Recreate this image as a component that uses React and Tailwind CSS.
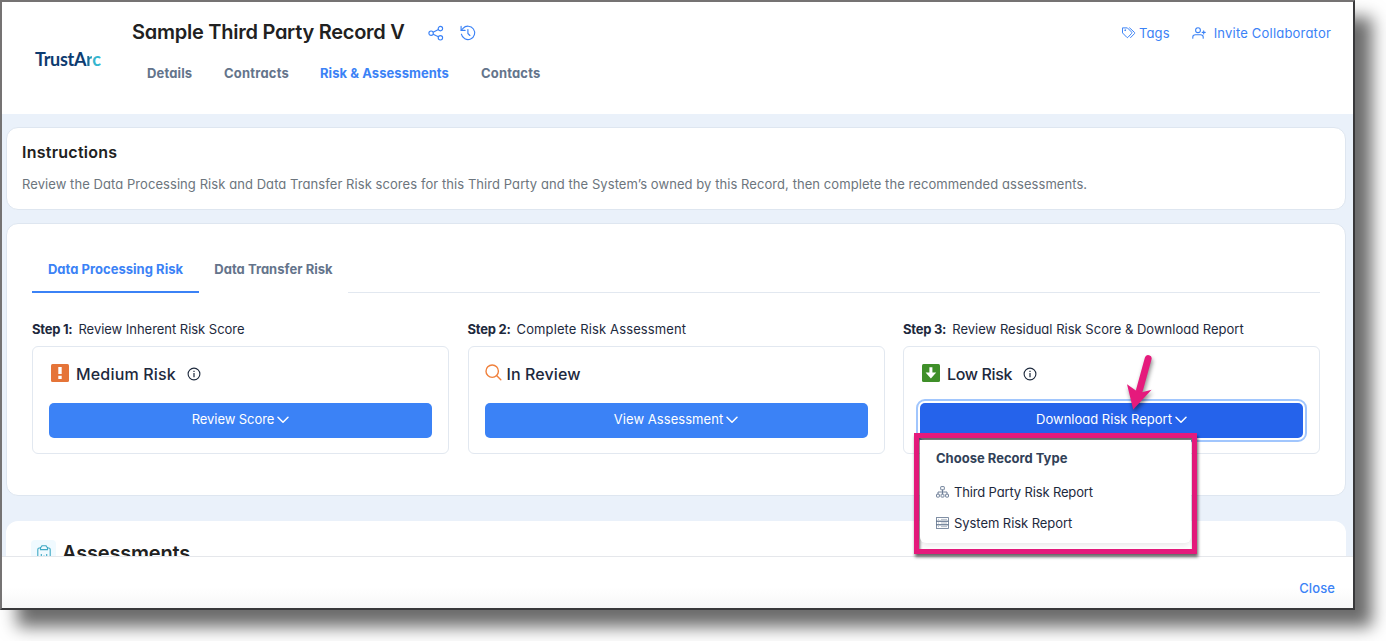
const navItems = [
  { label: 'Details', style: 'w-[45px] mr-8 tracking-[0.14px] text-[#64748b]' },
  { label: 'Contracts', style: 'w-[65px] mr-[31px] tracking-[0.2px] text-[#64748b]' },
  { label: 'Risk & Assessments', style: 'w-[129px] mr-8 tracking-[0.06px] text-[#3b82f6]' },
  { label: 'Contacts', style: 'w-[60px] tracking-[0.17px] text-[#64748b]' },
];

function ShareIcon() {
  return (
    <svg width="16" height="16" viewBox="0 0 16 16" fill="none" stroke="currentColor" strokeWidth="1.15">
      <circle cx="3.1" cy="8.2" r="2.2" />
      <circle cx="12.4" cy="3.6" r="2.2" />
      <circle cx="12.4" cy="12.8" r="2.2" />
      <path d="M5.1 7.2l5.3-2.6M5.1 9.2l5.3 2.6" />
    </svg>
  );
}

function HistoryIcon() {
  return (
    <svg width="16" height="16" viewBox="0 0 16 16" fill="none" stroke="currentColor" strokeWidth="1.15" strokeLinecap="round" strokeLinejoin="round">
      <path d="M1.4 9.2A6.7 6.7 0 1 0 3 3.4L1.2 5.3" />
      <path d="M1.1 1.4v4h4" />
      <path d="M7.9 4.6v3.9l2 2" />
    </svg>
  );
}

function TagsIcon() {
  return (
    <svg width="14" height="12" viewBox="0 0 14 12" fill="none" stroke="currentColor" strokeLinejoin="round" strokeLinecap="round">
      <path d="M.8.9h4.6l4.2 4.2c.4.4.4.9 0 1.3L6 10.3c-.4.4-.8.4-1.2 0L.8 6.2z" />
      <path d="M7.6.9l4.8 4.4c.5.4.5.8.1 1.3l-3.9 4" />
      <circle cx="3.1" cy="3.2" r=".4" />
    </svg>
  );
}

function PersonPlusIcon() {
  return (
    <svg width="14" height="12" viewBox="0 0 14 12" fill="none" stroke="currentColor" strokeWidth="1.1" strokeLinecap="round">
      <circle cx="6" cy="3.2" r="2.4" />
      <path d="M.8 11.2V10C.8 8.6 2 7.7 3.4 7.7h5.2c1.4 0 2.6.9 2.6 2.3v1.2M10.2 5.4h3M11.7 3.9v3" />
    </svg>
  );
}

function InfoIcon() {
  return (
    <svg className="ml-[11px]" width="14" height="14" viewBox="0 0 14 14" fill="none" stroke="currentColor">
      <circle cx="7" cy="7" r="5.9" strokeWidth="1.1" />
      <path d="M7 6v4.2M7 3.8v1.2" strokeWidth="1.2" />
    </svg>
  );
}

function SearchIcon() {
  return (
    <svg className="mr-[5px] mb-[4px]" width="17" height="17" viewBox="0 0 17 17" fill="none" stroke="#f0803c" strokeWidth="1.4" strokeLinecap="round">
      <circle cx="7.2" cy="7.2" r="6.2" />
      <path d="M11.8 11.8l4 4" />
    </svg>
  );
}

function ChevronIcon() {
  return (
    <svg width="12" height="8" viewBox="0 0 12 8" fill="none" stroke="currentColor" strokeWidth="1.5" strokeLinecap="round" strokeLinejoin="round">
      <path d="M1 1.2l5 5 5-5" />
    </svg>
  );
}

function MediumIcon() {
  return (
    <svg width="18" height="18" viewBox="0 0 18 18">
      <rect width="18" height="18" rx="1.5" fill="#e57438" />
      <path d="M7.3 3h3.4v7H7.3zM7.3 11.7h3.4v3.2H7.3z" fill="#fff" />
    </svg>
  );
}

function LowIcon() {
  return (
    <svg width="18" height="18" viewBox="0 0 18 18">
      <rect width="18" height="18" rx="1.5" fill="#3f8f29" />
      <path d="M7.4 3.2h3v5.4h3.8L8.9 14.6 3.6 8.6h3.8z" fill="#fff" />
    </svg>
  );
}

function DiagramIcon() {
  return (
    <svg width="13" height="12" viewBox="0 0 13 12" fill="none" stroke="currentColor" strokeWidth="0.9">
      <rect x="4.7" y="0.6" width="3.6" height="3.2" rx="0.5" />
      <rect x="0.5" y="8.2" width="2.9" height="2.9" rx="0.5" />
      <rect x="5.05" y="8.2" width="2.9" height="2.9" rx="0.5" />
      <rect x="9.6" y="8.2" width="2.9" height="2.9" rx="0.5" />
      <path d="M6.5 3.8v4.4M2 8.2V6h9v2.2" />
    </svg>
  );
}

function ServerIcon() {
  return (
    <svg width="13" height="12" viewBox="0 0 13 12" fill="none" stroke="currentColor" strokeWidth="0.8">
      <rect x="0.5" y="0.6" width="12" height="3.6" />
      <rect x="0.5" y="4.2" width="12" height="3.6" />
      <rect x="0.5" y="7.8" width="12" height="3.6" />
      <path d="M2 2.4h1M5 2.4h6M2 6h1M5 6h6M2 9.6h1M5 9.6h6" strokeOpacity="0.6" />
    </svg>
  );
}

function ClipboardIcon() {
  return (
    <svg width="14" height="17" viewBox="0 0 14 17" fill="none" stroke="currentColor" strokeWidth="1.1">
      <path d="M3.4 3H2.2C1.3 3 .8 3.6.8 4.4v10.2c0 .8.5 1.4 1.4 1.4h9.6c.9 0 1.4-.6 1.4-1.4V4.4c0-.8-.5-1.4-1.4-1.4h-1.2" />
      <path d="M3.5 4.6V2.3l1-.4.4-1.1h4.2l.4 1.1 1 .4v2.3z" />
      <path d="M4.3 9v5M7 10.5V14M9.7 9v5" />
    </svg>
  );
}

function Arrow() {
  return (
    <svg className="pointer-events-none absolute -top-[51px] left-[204px] drop-shadow-[1px_3px_2px_rgba(0,0,0,0.45)]" width="32" height="60" viewBox="0 0 32 60">
      <path d="M24.2 6.5L15.5 38" stroke="#e51a7c" strokeWidth="6.8" strokeLinecap="round" />
      <path d="M9.2 57.5L3 32.2l10.3 7.3 3.7 1 10.6-2.7z" fill="#e51a7c" />
    </svg>
  );
}

function RecordMenu() {
  return (
    <div className="absolute top-[30px] -left-[6px] z-10 h-[121px] w-[283px] border-[5px] border-[#e51a7c] shadow-[1px_3px_3px_rgba(0,0,0,0.6),inset_1px_3px_3px_rgba(0,0,0,0.6)]">
      <div className="mt-[2px] ml-px h-[103px] w-[271px] rounded-b-md bg-white px-4 pt-[8px] text-slate-800 shadow-[0_2px_6px_rgba(0,0,0,0.1)]">
        <p className="text-[13px] leading-5 font-bold text-slate-700">Choose Record Type</p>
        <p className="mt-[14px] flex items-center gap-[5px] text-[13px] leading-5">
          <span className="text-slate-500"><DiagramIcon /></span>
          <span className="tracking-[-0.15px]">Third Party Risk Report</span>
        </p>
        <p className="mt-[11px] flex items-center gap-[5px] text-[13px] leading-5">
          <span className="text-slate-500"><ServerIcon /></span>
          <span className="tracking-[-0.06px]">System Risk Report</span>
        </p>
      </div>
    </div>
  );
}

function Step({ step, title, icon, status, info, button, active }) {
  return (
    <div className="flex flex-col text-slate-800">
      <p className="flex text-[13px] leading-5">
        <span className="mr-1.5 font-bold tracking-[-0.24px]">{step}</span>
        {title}
      </p>
      <div className="mt-[7px] h-[108px] rounded-md border border-slate-200 px-4">
        <div className="flex h-[56px] items-center pb-0.5">
          {icon}
          {status}
          {info && <InfoIcon />}
        </div>
        <div className="relative">
          <button
            className={
              active
                ? 'flex h-[35px] w-full items-center justify-center gap-[3px] rounded-[5px] bg-[#2563eb] pb-0.5 text-[13px] text-white outline-2 outline-offset-2 outline-[#a1c6fd]'
                : 'flex h-[35px] w-full items-center justify-center gap-[3px] rounded-[5px] bg-[#3b82f6] pb-0.5 text-[13px] text-white'
            }
          >
            {button}
            <ChevronIcon />
          </button>
          {active && <RecordMenu />}
          {active && <Arrow />}
        </div>
      </div>
    </div>
  );
}

export default function App() {
  return (
    <div className="h-[641px] w-[1386px] overflow-hidden bg-white font-[Inter,sans-serif] [font-feature-settings:'cv11']">
      <div className="flex h-[610px] w-[1355px] flex-col border-2 border-t-[#757373] border-r-[#39393b] border-b-[#39393b] border-l-[#757373] bg-[#eaf1fa] shadow-[17px_17px_16px_rgba(0,0,0,0.58)]">
        <header className="flex h-[112px] shrink-0 bg-white">
          <div className="w-[130px] pt-[45px] pl-[33px] font-[Lato] text-[18px] leading-6 font-bold tracking-[-0.3px] text-[#0d3b70]">
            TrustA<span className="bg-linear-to-r from-[#0d3b70] to-[#35b6cf] bg-clip-text text-transparent">r</span>
            <span className="text-[#35b6cf]">c</span>
          </div>
          <div className="flex-1 pt-[15px]">
            <div className="flex items-center">
              <h1 className="w-[273px] text-[20px] leading-[30px] font-semibold tracking-[-0.26px] whitespace-nowrap text-[#212121]">
                Sample Third Party Record V
              </h1>
              <div className="ml-[23px] flex gap-4 pt-px text-[#3b82f6]">
                <ShareIcon />
                <HistoryIcon />
              </div>
            </div>
            <nav className="mt-4 flex pl-[15px] text-[13px] leading-5 font-bold">
              {navItems.map((item) => (
                <a key={item.label} className={`whitespace-nowrap ${item.style}`}>{item.label}</a>
              ))}
            </nav>
          </div>
          <div className="mr-[22px] flex items-start pt-[21px] text-[13px] leading-5 text-[#3b82f6]">
            <span className="flex items-center gap-[3px] tracking-[0.1px]">
              <TagsIcon />
              Tags
            </span>
            <span className="ml-[22px] flex items-center gap-2 tracking-[0.2px]">
              <PersonPlusIcon />
              Invite Collaborator
            </span>
          </div>
        </header>

        <main className="flex min-h-0 flex-1 flex-col px-1 pr-[7px] pt-[13px]">
          <section className="h-[83px] shrink-0 rounded-[12px] border border-[#dee6f0] bg-white px-[15px] pt-[12px]">
            <h2 className="text-[16px] leading-6 font-semibold tracking-[0.25px] text-[#212121]">Instructions</h2>
            <p className="mt-[10px] text-[13px] leading-5 tracking-[0.067px] whitespace-nowrap text-[#6c757d]">
              Review the Data Processing Risk and Data Transfer Risk scores for this Third Party and the System’s owned by this Record, then complete the recommended assessments.
            </p>
          </section>

          <section className="mt-[13px] h-[273px] shrink-0 rounded-[12px] border border-[#dee6f0] bg-white px-[25px] pt-[24px]">
            <div className="flex h-[45px] text-[13px] font-bold">
              <div className="w-[167px] border-b-2 border-[#3b82f6] pt-[11px] text-center leading-5 tracking-[0.03px] text-[#3b82f6]">
                Data Processing Risk
              </div>
              <div className="w-[149px] pt-[11px] text-center leading-5 tracking-[0.03px] text-[#64748b]">Data Transfer Risk</div>
              <div className="flex-1 border-b border-slate-200" />
            </div>
            <div className="mt-[26px] grid grid-cols-3 gap-[18.5px]">
              <Step
                step="Step 1:"
                title={<span className="tracking-[-0.03px]">Review Inherent Risk Score</span>}
                icon={<span className="mr-[7px] ml-0.5 pb-[3px]"><MediumIcon /></span>}
                status={<span className="text-base font-medium tracking-[0.18px]">Medium Risk</span>}
                info
                button={<span className="tracking-[-0.07px]">Review Score</span>}
              />
              <Step
                step="Step 2:"
                title={<span className="tracking-[0.12px]">Complete Risk Assessment</span>}
                icon={<SearchIcon />}
                status={<span className="text-base font-medium tracking-[0.1px]">In Review</span>}
                button={<span className="tracking-[0.05px]">View Assessment</span>}
              />
              <Step
                step="Step 3:"
                title={<span className="tracking-[0.01px]">Review Residual Risk Score &amp; Download Report</span>}
                icon={<span className="mr-[7px] ml-0.5 pb-[3px]"><LowIcon /></span>}
                status={<span className="text-base font-medium tracking-[-0.36px]">Low Risk</span>}
                info
                button={<span>Download Risk Report</span>}
                active
              />
            </div>
          </section>

          <section className="mt-[25px] min-h-0 flex-1 overflow-hidden rounded-t-[12px] bg-white px-[25px] pt-[19px]">
            <div className="flex items-start gap-[7px]">
              <span className="flex size-[25px] shrink-0 justify-center rounded bg-[#f0faff] pt-[5px] text-[#3fa9c4]">
                <ClipboardIcon />
              </span>
              <h2 className="-ml-px text-[20px] leading-[26px] font-semibold tracking-[-0.2px] text-[#212121]">Assessments</h2>
            </div>
          </section>
        </main>

        <footer className="flex h-[52px] shrink-0 justify-end border-t border-gray-200 bg-linear-to-b from-white from-60% to-[#f7f7f7] pt-[21px] pr-[18px]">
          <button className="h-5 text-[13px] leading-5 font-medium tracking-[0.1px] text-[#3b82f6]">Close</button>
        </footer>
      </div>
    </div>
  );
}
